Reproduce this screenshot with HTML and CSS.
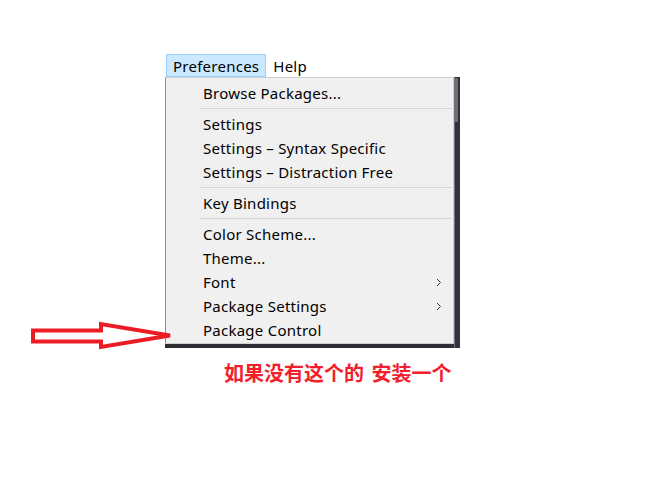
FILE: index.html
```html
<!DOCTYPE html>
<html lang="zh-CN">
<head>
<meta charset="utf-8">
<title>Preferences menu</title>
<link rel="stylesheet" href="styles.css">
</head>
<body>
<div class="stage">
  <div class="menubar">
    <div class="mb-item mb-active">Preferences</div>
    <div class="mb-item">Help</div>
  </div>
  <div class="window">
    <div class="menu">
      <div class="item">Browse Packages...</div>
      <div class="sep"></div>
      <div class="item">Settings</div>
      <div class="item">Settings – Syntax Specific</div>
      <div class="item">Settings – Distraction Free</div>
      <div class="sep"></div>
      <div class="item">Key Bindings</div>
      <div class="sep"></div>
      <div class="item">Color Scheme...</div>
      <div class="item">Theme...</div>
      <div class="item"><span>Font</span><svg class="chev" width="6" height="9" viewBox="0 0 6 9"><path d="M1 1 L4.5 4.5 L1 8" fill="none" stroke="#333" stroke-width="1"/></svg></div>
      <div class="item"><span>Package Settings</span><svg class="chev" width="6" height="9" viewBox="0 0 6 9"><path d="M1 1 L4.5 4.5 L1 8" fill="none" stroke="#333" stroke-width="1"/></svg></div>
      <div class="item">Package Control</div>
    </div>
    <div class="scroll"><div class="thumb"></div></div>
  </div>
  <div class="note">如果没有这个的 安装一个</div>
  <svg class="arrow" width="160" height="40" viewBox="20 315 160 40">
    <polygon points="33,330.5 101,330.5 101,324 170,335.5 101,347 101,341.5 33,341.5" fill="none" stroke="#ec1c24" stroke-width="4" stroke-linejoin="miter"/>
  </svg>
</div>
</body>
</html>
```

FILE: styles.css
```css
html, body {
  margin: 0;
  padding: 0;
  background: #ffffff;
}
.stage {
  position: relative;
  width: 651px;
  height: 482px;
  padding-top: 54px;
  box-sizing: border-box;
  font-family: "Noto Sans", "Open Sans", sans-serif;
  color: #000;
}
.menubar {
  display: flex;
  margin-left: 166px;
  height: 23px;
}
.mb-item {
  font-size: 15px;
  line-height: 23px;
  padding: 0 6px 0 6px;
  border: 1px solid transparent;
  box-sizing: border-box;
  height: 23px;
  letter-spacing: 0.25px;
}
.mb-active {
  background: #cce8ff;
  border-color: #99d1ff;
}
.window {
  display: flex;
  margin-left: 165px;
  width: 295px;
  height: 271px;
  background: #2b2f34;
  align-items: flex-start;
}
.menu {
  width: 289px;
  height: 267px;
  box-sizing: border-box;
  background: #f0f0f0;
  border: 1px solid #cfcfcf;
  border-left-color: #8e8e8e;
  padding-top: 3px;
}
.item {
  display: flex;
  align-items: center;
  justify-content: space-between;
  height: 24px;
  padding-left: 37px;
  padding-right: 11px;
  font-size: 15px;
  letter-spacing: 0.25px;
  white-space: nowrap;
}
.chev {
  display: block;
}
.sep {
  height: 1px;
  background: #d6d6d6;
  margin: 3px 1px 3px 33px;
}
.scroll {
  width: 6px;
  height: 271px;
  background: #30343a;
  border-left: 1px solid #70747a;
  box-sizing: border-box;
}
.thumb {
  height: 44px;
  margin-top: 1px;
  width: 3px;
  background: #6d7176;
}
.note {
  margin-top: 13px;
  margin-left: 224px;
  font-family: "Noto Sans CJK SC", sans-serif;
  font-weight: 700;
  font-size: 20px;
  line-height: 24px;
  word-spacing: 3px;
  color: #f2202a;
}
.arrow {
  position: absolute;
  left: 20px;
  top: 315px;
}
```
